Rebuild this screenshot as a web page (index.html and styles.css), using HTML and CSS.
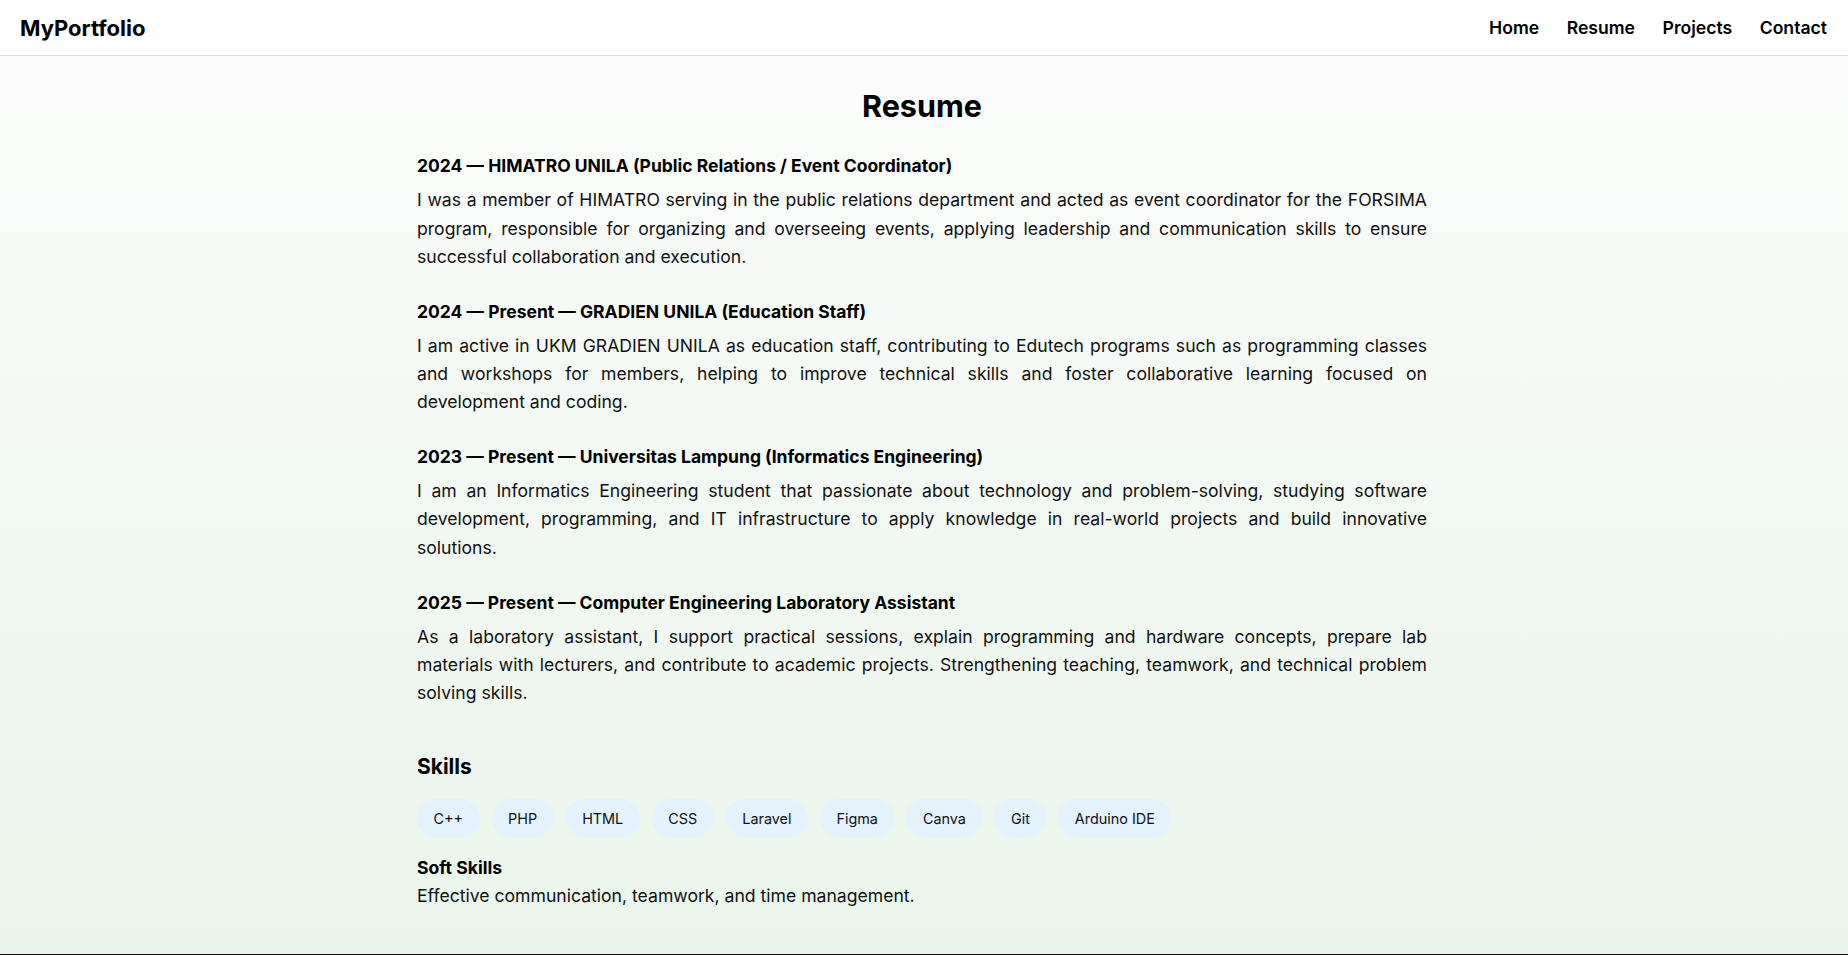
FILE: index.html
```html
<!DOCTYPE html>
<html lang="en">
<head>
<meta charset="utf-8">
<title>Resume - MyPortfolio</title>
<link rel="stylesheet" href="styles.css">
</head>
<body>
<header class="site-header">
  <a class="logo" href="#">MyPortfolio</a>
  <nav class="nav">
    <a href="#">Home</a>
    <a href="#">Resume</a>
    <a href="#">Projects</a>
    <a href="#">Contact</a>
  </nav>
</header>
<main class="page">
  <div class="container">
    <h1 class="page-title">Resume</h1>

    <section class="entry">
      <h3 class="entry-title">2024 — HIMATRO UNILA (Public Relations / Event Coordinator)</h3>
      <p class="entry-text">I was a member of HIMATRO serving in the public relations department and acted as event coordinator for the FORSIMA program, responsible for organizing and overseeing events, applying leadership and communication skills to ensure successful collaboration and execution.</p>
    </section>

    <section class="entry">
      <h3 class="entry-title">2024 — Present — GRADIEN UNILA (Education Staff)</h3>
      <p class="entry-text">I am active in UKM GRADIEN UNILA as education staff, contributing to Edutech programs such as programming classes and workshops for members, helping to improve technical skills and foster collaborative learning focused on development and coding.</p>
    </section>

    <section class="entry">
      <h3 class="entry-title">2023 — Present — Universitas Lampung (Informatics Engineering)</h3>
      <p class="entry-text">I am an Informatics Engineering student that passionate about technology and problem-solving, studying software development, programming, and IT infrastructure to apply knowledge in real-world projects and build innovative solutions.</p>
    </section>

    <section class="entry">
      <h3 class="entry-title">2025 — Present — Computer Engineering Laboratory Assistant</h3>
      <p class="entry-text">As a laboratory assistant, I support practical sessions, explain programming and hardware concepts, prepare lab materials with lecturers, and contribute to academic projects. Strengthening teaching, teamwork, and technical problem solving skills.</p>
    </section>

    <section class="skills">
      <h2 class="skills-title">Skills</h2>
      <ul class="chips">
        <li class="chip">C++</li>
        <li class="chip">PHP</li>
        <li class="chip">HTML</li>
        <li class="chip">CSS</li>
        <li class="chip">Laravel</li>
        <li class="chip">Figma</li>
        <li class="chip">Canva</li>
        <li class="chip">Git</li>
        <li class="chip">Arduino IDE</li>
      </ul>
      <h4 class="soft-title">Soft Skills</h4>
      <p class="soft-text">Effective communication, teamwork, and time management.</p>
    </section>
  </div>
</main>
<footer class="site-footer">
  <p>© 2025 MyPortfolio. All rights reserved.</p>
</footer>
</body>
</html>
```

FILE: styles.css
```css
html {
  scrollbar-width: none;
}
html::-webkit-scrollbar {
  display: none;
}
* {
  box-sizing: border-box;
}
body {
  margin: 0;
  font-family: Inter, "Noto Sans", "Liberation Sans", sans-serif;
  color: #111;
  background: #ffffff;
}
a {
  color: inherit;
  text-decoration: none;
}

.site-header {
  height: 56px;
  display: flex;
  align-items: center;
  justify-content: space-between;
  padding: 0 21px 0 20px;
  background: #ffffff;
  border-bottom: 1px solid #dcdcdc;
}
.logo {
  font-size: 22px;
  font-weight: 700;
  color: #000;
}
.nav {
  display: flex;
  gap: 27.5px;
}
.nav a {
  font-size: 17.6px;
  font-weight: 600;
  color: #000;
}

.page {
  background: linear-gradient(to bottom, #fbfcfb 0%, #e9f5eb 100%);
  padding: 31px 22px 43px 18px;
}
.container {
  max-width: 1010px;
  margin: 0 auto;
}
.page-title {
  margin: 0 0 30px;
  text-align: center;
  font-size: 30.5px;
  line-height: 1.26;
  font-weight: 700;
  color: #000;
}
.entry {
  margin-bottom: 30px;
}
.entry-title {
  margin: 0 0 10px;
  font-size: 17.5px;
  line-height: 1.2;
  font-weight: 700;
  color: #000;
}
.entry-text {
  margin: 0;
  font-size: 17.6px;
  line-height: 1.6;
  text-align: justify;
  color: #111;
}

.skills {
  margin-top: 47px;
}
.skills-title {
  margin: 0 0 20px;
  font-size: 21px;
  line-height: 1.2;
  font-weight: 700;
  color: #000;
}
.chips {
  list-style: none;
  margin: 0 0 20px;
  padding: 0;
  display: flex;
  flex-wrap: wrap;
  gap: 12px;
}
.chip {
  height: 38px;
  display: flex;
  align-items: center;
  padding: 0 16.5px;
  border-radius: 20px;
  background: #e3f2fd;
  font-size: 14.4px;
  color: #111;
}
.soft-title {
  margin: 0 0 4px;
  font-size: 17.6px;
  line-height: 1.2;
  font-weight: 700;
  color: #000;
}
.soft-text {
  margin: 0;
  font-size: 17.6px;
  line-height: 1.6;
  color: #111;
}

.site-footer {
  background: #111;
  color: #fff;
  text-align: center;
  padding: 24px 20px;
}
.site-footer p {
  margin: 0;
  font-size: 14px;
}
```
